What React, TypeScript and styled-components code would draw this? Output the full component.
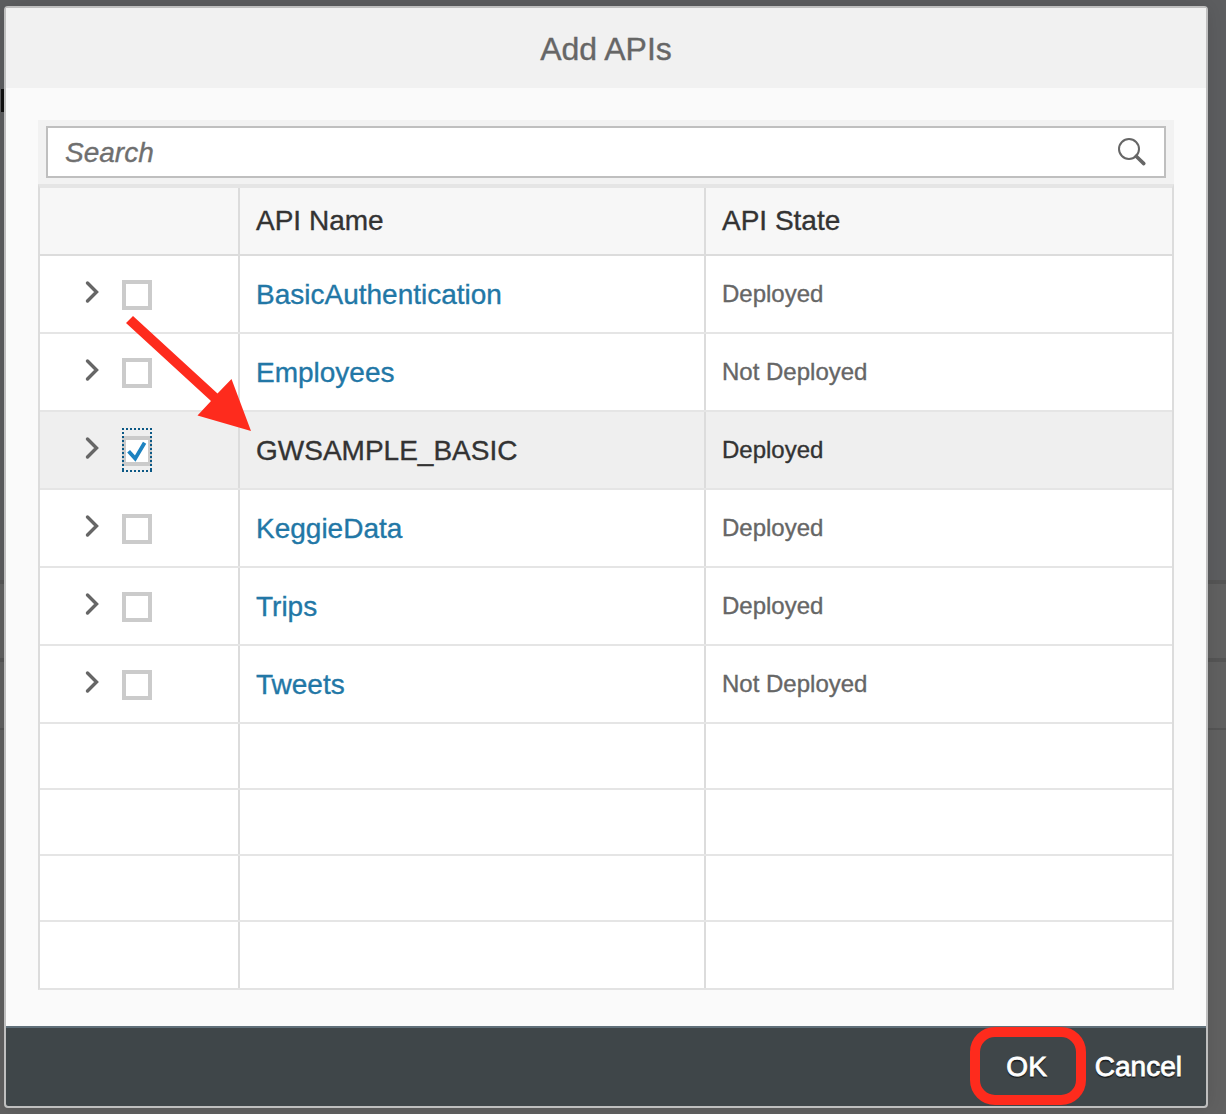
import React, { useState } from "react";
import styled, { createGlobalStyle } from "styled-components";

const GlobalStyle = createGlobalStyle`
  * { box-sizing: border-box; }
  body {
    margin: 0;
    font-family: "Liberation Sans", Arial, Helvetica, sans-serif;
    -webkit-font-smoothing: antialiased;
    -webkit-text-stroke: 0.35px currentColor;
  }
`;

const Backdrop = styled.div`
  position: relative;
  height: 1114px;
  padding: 6px 18px 6px 4px;
  overflow: hidden;
  background: linear-gradient(#5d5e60 0, #5d5e60 580px, #616161 580px, #616161 100%);
`;

const BackdropRule = styled.div<{ $top: number; $height: number }>`
  position: absolute;
  left: 0;
  right: 0;
  top: ${(p) => p.$top}px;
  height: ${(p) => p.$height}px;
  background: #555;
`;

const BackdropMark = styled.div`
  position: absolute;
  left: 1px;
  top: 89px;
  width: 6px;
  height: 23px;
  background: #111;
`;

const Dialog = styled.section`
  position: relative;
  display: flex;
  flex-direction: column;
  height: 1102px;
  border: 2px solid #bfbfbf;
  border-radius: 4px;
  background: #fafafa;
  box-shadow: 0 0 20px rgba(0, 0, 0, 0.12);
`;

const Title = styled.h1`
  margin: 0;
  flex: 0 0 80px;
  height: 80px;
  background: #f1f1f1;
  color: #666;
  font-size: 32px;
  font-weight: 400;
  line-height: 82px;
  text-align: center;
`;

const Content = styled.div`
  flex: 1;
  min-height: 0;
  padding: 32px 32px 0;
`;

const Toolbar = styled.div`
  height: 64px;
  padding: 6px 8px;
  background: #f2f2f2;
`;

const SearchField = styled.label`
  display: flex;
  align-items: center;
  justify-content: space-between;
  height: 52px;
  padding: 0 17px;
  border: 2px solid #bfbfbf;
  background: #fff;
`;

const SearchInput = styled.input`
  flex: 1;
  height: 44px;
  padding: 2px 0 0;
  border: 0;
  outline: 0;
  background: transparent;
  font: italic 28px "Liberation Sans", Arial, sans-serif;
  color: #333;
  -webkit-text-stroke: 0.35px #6f6f6f;
  &::placeholder { color: #6f6f6f; opacity: 1; }
`;

const Table = styled.div`
  height: 806px;
  border: 2px solid #dcdcdc;
  border-top: 4px solid #e5e5e5;
  border-bottom-color: #e3e3e3;
  background: #fff;
`;

const Row = styled.div<{ $kind?: "head" | "selected" | "item" | "empty" }>`
  display: grid;
  grid-template-columns: 200px 466px 1fr;
  height: ${(p) => (p.$kind === "head" ? 68 : p.$kind === "empty" ? 66 : 78)}px;
  background: ${(p) => (p.$kind === "head" ? "#f7f7f7" : p.$kind === "selected" ? "#efefef" : "#fff")};
  border-bottom: 2px solid ${(p) => (p.$kind === "head" ? "#dcdcdc" : "#e5e5e5")};
  &:last-child { border-bottom: 0; }
`;

const Cell = styled.div`
  display: flex;
  align-items: center;
  padding-left: 16px;
  font-size: 28px;
  color: #333;
  &:not(:last-child) { border-right: 2px solid #dcdcdc; }
`;

const SelectCell = styled(Cell)`
  padding-left: 45px;
  gap: 23px;
`;

const NameCell = styled(Cell)<{ $link: boolean }>`
  padding-top: 1px;
  color: ${(p) => (p.$link ? "#2277a6" : "#333")};
`;

const StateCell = styled(Cell)<{ $strong: boolean }>`
  font-size: 24px;
  color: ${(p) => (p.$strong ? "#333" : "#666")};
`;

const Chevron = styled.svg`
  flex: none;
  margin-bottom: 5px;
`;

const Focus = styled.button`
  position: relative;
  display: flex;
  align-items: center;
  width: 30px;
  height: 44px;
  margin-top: 2px;
  padding: 0;
  border: 0;
  background: transparent;
`;

const Box = styled.span`
  display: block;
  width: 30px;
  height: 30px;
  border: 4px solid #cbcbcb;
  background: #fff;
`;

const FocusMark = styled.svg`
  position: absolute;
  left: 0;
  top: -1px;
`;

const Footer = styled.footer`
  display: flex;
  justify-content: flex-end;
  align-items: center;
  flex: 0 0 80px;
  padding-right: 24px;
  border-top: 2px solid #5f6f79;
  border-radius: 0 0 2px 2px;
  background: #3f4649;
`;

const Action = styled.button<{ $gap?: number }>`
  margin: 0 ${(p) => p.$gap ?? 0}px 0 0;
  padding: 0;
  border: 0;
  background: none;
  color: #fff;
  font: 28px "Liberation Sans", Arial, sans-serif;
  text-shadow: 0 2px 1px rgba(0, 0, 0, 0.6);
  -webkit-text-stroke: 0.8px #fff;
`;

const Ring = styled.div`
  position: absolute;
  left: 970px;
  top: 1027px;
  width: 116px;
  height: 78px;
  border: 10px solid #fe2b1d;
  border-radius: 25px;
`;

const Arrow = styled.svg`
  position: absolute;
  left: 120px;
  top: 310px;
`;

const apis = [
  { name: "BasicAuthentication", state: "Deployed" },
  { name: "Employees", state: "Not Deployed" },
  { name: "GWSAMPLE_BASIC", state: "Deployed" },
  { name: "KeggieData", state: "Deployed" },
  { name: "Trips", state: "Deployed" },
  { name: "Tweets", state: "Not Deployed" },
];

function SearchIcon() {
  return (
    <svg width="30" height="30" viewBox="0 0 30 30" fill="none" stroke="#666">
      <circle cx="12" cy="12" r="10" strokeWidth="2" />
      <path d="M19.2 19.2 26.8 26.6" strokeWidth="3.6" strokeLinecap="round" />
    </svg>
  );
}

function CheckBox({ checked, onToggle }: { checked: boolean; onToggle: () => void }) {
  return (
    <Focus onClick={onToggle}>
      <Box />
      {checked && (
        <FocusMark width="30" height="44" viewBox="0 0 30 44" fill="none">
          <path d="M1 0V44M29 0V44M0 1H30M0 43H30" stroke="#0b5885" strokeWidth="2" strokeDasharray="2 2" />
          <path d="M6.6 23.2 13.2 30.6 22.6 14.8" stroke="#1c82c0" strokeWidth="3.8" />
        </FocusMark>
      )}
    </Focus>
  );
}

export default function App() {
  const [selected, setSelected] = useState<string[]>(["GWSAMPLE_BASIC"]);
  const toggle = (name: string) =>
    setSelected((list) => (list.includes(name) ? list.filter((n) => n !== name) : [...list, name]));

  return (
    <>
      <GlobalStyle />
      <Backdrop>
        <BackdropRule $top={580} $height={4} />
        <BackdropRule $top={658} $height={4} />
        <BackdropRule $top={728} $height={2} />
        <BackdropMark />
        <Dialog>
          <Title>Add APIs</Title>
          <Content>
            <Toolbar>
              <SearchField>
                <SearchInput placeholder="Search" />
                <SearchIcon />
              </SearchField>
            </Toolbar>
            <Table>
              <Row $kind="head">
                <Cell />
                <Cell>API Name</Cell>
                <Cell>API State</Cell>
              </Row>
              {apis.map(({ name, state }) => {
                const on = selected.includes(name);
                return (
                  <Row key={name} $kind={on ? "selected" : "item"}>
                    <SelectCell>
                      <Chevron width="14" height="24" viewBox="0 0 14 24" fill="none">
                        <path d="M2.5 3 11.5 12 2.5 21" stroke="#666" strokeWidth="3.4" strokeLinecap="round" />
                      </Chevron>
                      <CheckBox checked={on} onToggle={() => toggle(name)} />
                    </SelectCell>
                    <NameCell $link={!on}>{name}</NameCell>
                    <StateCell $strong={on}>{state}</StateCell>
                  </Row>
                );
              })}
              {[0, 1, 2, 3].map((n) => (
                <Row key={n} $kind="empty">
                  <Cell />
                  <Cell />
                  <Cell />
                </Row>
              ))}
            </Table>
          </Content>
          <Footer>
            <Action $gap={48}>OK</Action>
            <Action>Cancel</Action>
          </Footer>
        </Dialog>
        <Ring />
        <Arrow width="136" height="126" viewBox="120 310 136 126">
          <path d="M126 323 133 316 217.5 393.5 231.5 379 251 431 197.5 415.5 211 401Z" fill="#fe2b1d" />
        </Arrow>
      </Backdrop>
    </>
  );
}
